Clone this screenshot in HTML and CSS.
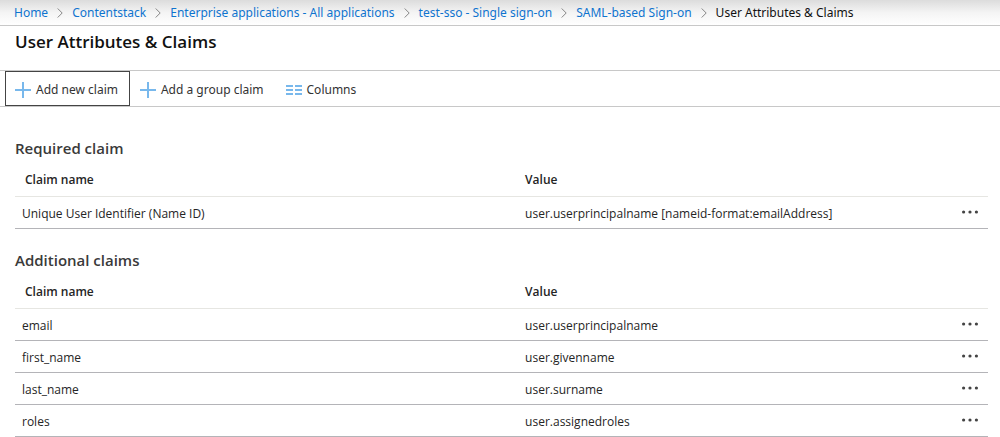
FILE: index.html
```html
<!DOCTYPE html>
<html lang="en">
<head>
<meta charset="utf-8">
<meta name="viewport" content="width=device-width, initial-scale=1">
<title>User Attributes &amp; Claims</title>
<link rel="stylesheet" href="styles.css">
</head>
<body>
<svg class="sprite" aria-hidden="true">
  <symbol id="chevron" viewBox="0 0 6 10"><path d="M.7.5 5.2 5 .7 9.5" fill="none" stroke="#858585" stroke-width="1"/></symbol>
  <symbol id="plus" viewBox="0 0 16 16"><path d="M8 0v16M0 8h16" fill="none" stroke="#78b8ec" stroke-width="2"/></symbol>
  <symbol id="columns" viewBox="0 0 16 10"><path d="M0 1h7M9 1h7M0 5h7M9 5h7M0 9h7M9 9h7" fill="none" stroke="#78b8ec" stroke-width="2"/></symbol>
  <symbol id="dots" viewBox="0 0 16 4"><g fill="#444"><circle cx="1.6" cy="2" r="1.6"/><circle cx="8" cy="2" r="1.6"/><circle cx="14.4" cy="2" r="1.6"/></g></symbol>
</svg>
<nav class="breadcrumb" aria-label="Breadcrumb">
  <a href="#">Home</a>
  <svg class="chevron" aria-hidden="true"><use href="#chevron"/></svg>
  <a href="#">Contentstack</a>
  <svg class="chevron" aria-hidden="true"><use href="#chevron"/></svg>
  <a href="#">Enterprise applications - All applications</a>
  <svg class="chevron" aria-hidden="true"><use href="#chevron"/></svg>
  <a href="#">test-sso - Single sign-on</a>
  <svg class="chevron" aria-hidden="true"><use href="#chevron"/></svg>
  <a href="#">SAML-based Sign-on</a>
  <svg class="chevron" aria-hidden="true"><use href="#chevron"/></svg>
  <span>User Attributes &amp; Claims</span>
</nav>
<header class="page-header"><h1>User Attributes &amp; Claims</h1></header>
<div class="toolbar">
  <button class="command focused" type="button"><svg class="plus" aria-hidden="true"><use href="#plus"/></svg>Add new claim</button>
  <button class="command" type="button"><svg class="plus" aria-hidden="true"><use href="#plus"/></svg>Add a group claim</button>
  <button class="command" type="button"><svg class="columns" aria-hidden="true"><use href="#columns"/></svg>Columns</button>
</div>
<main class="content">
  <section>
    <h2 id="required">Required claim</h2>
    <table class="claims" aria-labelledby="required">
      <thead><tr><th class="name" scope="col">Claim name</th><th scope="col">Value</th><td class="menu"></td></tr></thead>
      <tbody>
        <tr><td>Unique User Identifier (Name ID)</td><td>user.userprincipalname [nameid-format:emailAddress]</td><td><button class="more" type="button" aria-label="More options"><svg class="dots" aria-hidden="true"><use href="#dots"/></svg></button></td></tr>
      </tbody>
    </table>
  </section>
  <section>
    <h2 id="additional">Additional claims</h2>
    <table class="claims" aria-labelledby="additional">
      <thead><tr><th class="name" scope="col">Claim name</th><th scope="col">Value</th><td class="menu"></td></tr></thead>
      <tbody>
        <tr><td>email</td><td>user.userprincipalname</td><td><button class="more" type="button" aria-label="More options for email"><svg class="dots" aria-hidden="true"><use href="#dots"/></svg></button></td></tr>
        <tr><td>first_name</td><td>user.givenname</td><td><button class="more" type="button" aria-label="More options for first_name"><svg class="dots" aria-hidden="true"><use href="#dots"/></svg></button></td></tr>
        <tr><td>last_name</td><td>user.surname</td><td><button class="more" type="button" aria-label="More options for last_name"><svg class="dots" aria-hidden="true"><use href="#dots"/></svg></button></td></tr>
        <tr><td>roles</td><td>user.assignedroles</td><td><button class="more" type="button" aria-label="More options for roles"><svg class="dots" aria-hidden="true"><use href="#dots"/></svg></button></td></tr>
      </tbody>
    </table>
  </section>
</main>
</body>
</html>
```

FILE: styles.css
```css
* { box-sizing: border-box; }

body {
  margin: 0;
  background: #fff;
  color: #252525;
  font: 12px/16px "Segoe UI", "Open Sans", "Noto Sans", sans-serif;
}

.breadcrumb,
.toolbar { font-family: "Segoe UI", "Noto Sans", "Open Sans", sans-serif; }

.sprite { display: none; }

svg { flex: none; }

.breadcrumb {
  display: flex;
  align-items: center;
  gap: 9px;
  height: 26px;
  padding: 0 14px;
  border-bottom: 1px solid #c8c8c8;
  background: linear-gradient(#dcdcdc, #f4f4f4 50%, #fff);
  color: #111;
  white-space: nowrap;
}

.breadcrumb a { color: #0f74cf; text-decoration: none; }

.chevron { width: 6px; height: 10px; }

.page-header { padding: 4px 15px 16px; }

h1 {
  margin: 0;
  color: #111;
  font-size: 17px;
  font-weight: 600;
  line-height: 24px;
}

.toolbar {
  display: flex;
  padding: 0 5px;
  border: solid #c8c8c8;
  border-width: 1px 0;
}

.command {
  display: flex;
  align-items: center;
  gap: 5px;
  height: 35px;
  padding: 2px 11px 0 9px;
  border: 1px solid transparent;
  background: none;
  color: #333;
  font: inherit;
  white-space: nowrap;
}

.focused { border-color: #444; }

.plus { width: 16px; height: 16px; }

.columns { width: 16px; height: 10px; }

.content { padding: 28px 12px 0 15px; }

h2 {
  margin: 0;
  color: #3a3a3a;
  font-size: 15px;
  font-weight: 600;
  line-height: 27px;
}

section + section { margin-top: 18px; }

.claims {
  width: 100%;
  table-layout: fixed;
  border-collapse: separate;
  border-spacing: 0;
}

.claims th,
.claims td {
  height: 32px;
  padding: 2px 10px 0;
  border-bottom: 1px solid #b4b4b8;
  text-align: left;
}

.claims th { font-weight: 600; }

.claims thead th,
.claims thead td { height: 35px; border-color: #e6e6e2; }

.claims tbody td:first-child { padding-left: 7px; }

.claims .name { width: 51.4%; }

.claims .menu { width: 36px; }

.more {
  display: flex;
  width: 16px;
  padding: 4px 0 8px;
  border: 0;
  background: none;
}

.dots { width: 16px; height: 4px; }
```
